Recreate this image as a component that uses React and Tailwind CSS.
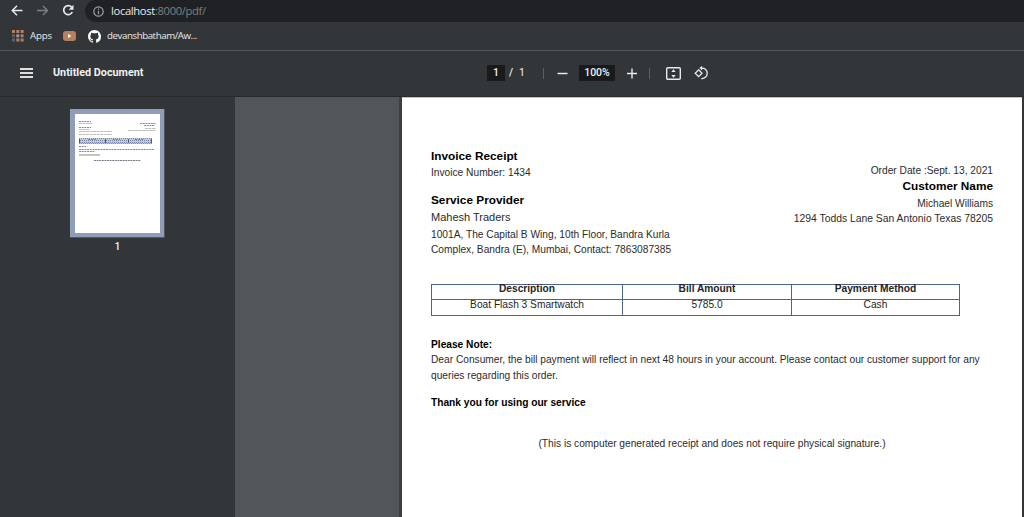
import React from "react";

function BrowserBar() {
  return (
    <div className="flex h-[22px] items-start">
      <svg className="ml-[11px] mt-[4px] shrink-0" width="12" height="13" viewBox="0 0 12 13" fill="none" stroke="#e8eaed" strokeWidth="1.5">
        <path d="M11.5 6.5H1.5M6 1.8L1.3 6.5L6 11.2" />
      </svg>
      <svg className="ml-[14px] mt-[4px] shrink-0" width="12" height="13" viewBox="0 0 12 13" fill="none" stroke="#7d8083" strokeWidth="1.4">
        <path d="M0 6.5H10M6 2L10.5 6.5L6 11" />
      </svg>
      <svg className="ml-[13px] mt-[4px] shrink-0" width="12" height="13" viewBox="0 0 12 13" fill="none" stroke="#e8eaed" strokeWidth="1.7">
        <path d="M9.7 3.3A4.5 4.5 0 1 0 10.3 8" />
        <path d="M11.5 0.8V5.7H6.7Z" fill="#e8eaed" stroke="none" />
      </svg>
      <div className="ml-[11px] flex h-[22px] flex-1 items-center rounded-l-full bg-[#202124] pl-[8px]">
        <svg width="11" height="11" viewBox="0 0 11 11" fill="none" stroke="#9aa0a6" strokeWidth="1.2">
          <circle cx="5.5" cy="5.5" r="4.7" />
          <path d="M5.5 4.8V8.2M5.5 2.6V3.8" />
        </svg>
        <div className="ml-[7px] whitespace-nowrap font-['Open_Sans',sans-serif] text-[11.2px] leading-[22px] tracking-[-0.33px] text-[#7d8083]">
          <span className="text-[#e8eaed]">localhost</span>:8000/pdf/
        </div>
      </div>
    </div>
  );
}

function Bookmarks() {
  return (
    <div className="flex h-[29px] items-center border-b border-[#53565a] font-['Open_Sans',sans-serif] text-[9.7px] tracking-[-0.42px] text-[#e8eaed]">
      <svg className="ml-[12px]" width="12" height="12" viewBox="0 0 12 12">
        <g fill="#b57f60">
          <path d="M0 0h3v3H0zM4.3 0h3v3h-3zM8.6 0h3v3h-3zM8.6 4.3h3v3h-3zM4.3 8.6h3v3h-3zM8.6 8.6h3v3h-3z" />
        </g>
        <path fill="#5d6064" d="M0 4.3h3v3H0zM0 8.6h3v3H0z" />
        <path fill="#8f9db8" d="M4.3 4.3h3v3h-3z" />
      </svg>
      <span className="ml-[6px] w-[33px] tracking-[-0.2px]">Apps</span>
      <svg width="13" height="10" viewBox="0 0 13 10">
        <rect width="13" height="10" rx="3" fill="#b57f60" />
        <path d="M5 3L8.4 5L5 7Z" fill="#fff" />
      </svg>
      <svg className="ml-[12px]" width="13" height="13" viewBox="0 0 16 16" fill="#fff">
        <path d="M8 0C3.58 0 0 3.58 0 8c0 3.54 2.29 6.53 5.47 7.59.4.07.55-.17.55-.38 0-.19-.01-.82-.01-1.49-2.01.37-2.53-.49-2.69-.94-.09-.23-.48-.94-.82-1.13-.28-.15-.68-.52-.01-.53.63-.01 1.08.58 1.23.82.72 1.21 1.87.87 2.33.66.07-.52.28-.87.51-1.07-1.78-.2-3.64-.89-3.64-3.95 0-.87.31-1.59.82-2.15-.08-.2-.36-1.02.08-2.12 0 0 .67-.21 2.2.82.64-.18 1.32-.27 2-.27s1.36.09 2 .27c1.53-1.04 2.2-.82 2.2-.82.44 1.1.16 1.92.08 2.12.51.56.82 1.27.82 2.15 0 3.07-1.87 3.75-3.65 3.95.29.25.54.73.54 1.48 0 1.07-.01 1.93-.01 2.2 0 .21.15.46.55.38A8.01 8.01 0 0 0 16 8c0-4.42-3.58-8-8-8z" />
      </svg>
      <span className="ml-[6px]">devanshbatham/Aw...</span>
    </div>
  );
}

function PdfToolbar() {
  return (
    <div className="flex h-[46px] shrink-0 items-center border-b border-[#282a2d] pb-[1px] font-[Roboto,sans-serif] text-[10.5px] font-medium text-[#f1f1f1]">
      <div className="ml-[20px] flex w-[13px] flex-col gap-[2px]">
        <div className="h-[2px] bg-[#dcdedf]" />
        <div className="h-[2px] bg-[#dcdedf]" />
        <div className="h-[2px] bg-[#dcdedf]" />
      </div>
      <div className="ml-[20px] w-[434px] text-[10.8px] font-bold">Untitled Document</div>
      <div className="flex h-[16px] w-[18px] items-center justify-center bg-[#191a1c]">1</div>
      <div className="ml-[4px] w-[10px]">/</div>
      <div className="w-[24px] font-normal">1</div>
      <div className="h-[11px] w-[1px] bg-[#5c5f63]" />
      <svg className="ml-[13px]" width="11" height="11" stroke="#e8eaed" strokeWidth="1.5">
        <path d="M0.5 5.5h10" />
      </svg>
      <div className="ml-[11px] flex h-[16px] w-[36px] items-center justify-center bg-[#191a1c]">100%</div>
      <svg className="ml-[12px]" width="10" height="11" stroke="#e8eaed" strokeWidth="1.4">
        <path d="M0 5.5h10M5 0.5v10" />
      </svg>
      <div className="ml-[12px] h-[11px] w-[1px] bg-[#5c5f63]" />
      <svg className="ml-[16px]" width="15" height="13" viewBox="0 0 15 13" fill="none">
        <rect x="0.7" y="0.7" width="13.6" height="11.6" rx="1" stroke="#e8eaed" strokeWidth="1.4" />
        <path d="M7.5 2.2L9.7 5H5.3ZM7.5 10.8L9.7 8H5.3Z" fill="#e8eaed" />
      </svg>
      <svg className="ml-[13px]" width="14" height="14" viewBox="0 0 14 14" fill="none" stroke="#e8eaed" strokeWidth="1.3">
        <path d="M4.6 3.8L8 7.2L4.600 10.600L1.200 7.200Z" />
        <path d="M7.2 2.100A5.300 5.300 0 1 1 7.200 12.600" />
        <path d="M8.200 -0.200V4.500L5.400 2.100Z" fill="#e8eaed" stroke="none" />
      </svg>
    </div>
  );
}

function Thumbnail() {
  return (
    <div className="h-[129px] w-[95px] border-r border-b border-[#53565a] bg-[#8f9db8] pl-[5px] pt-[5px]">
      <svg width="85" height="119" viewBox="0 0 85 119" fill="none">
        <rect width="85" height="119" fill="#fff" />
        <g stroke="#7f8ba3" strokeWidth="1" strokeDasharray="2 0.7">
          <path d="M4 7.500h12M4 13.500h12M65 9.500h16M69 11.500h11M4 32.500h8M4 35.500h75M4 37.500h16" />
        </g>
        <g stroke="#bdbeba" strokeWidth="1" strokeDasharray="3 0.5">
          <path d="M4 9.500h14M4 15.500h11M4 17.500h33M4 20.500h33M70 14.500h11M53 16.500h28" />
        </g>
        <path d="M4 41h21" stroke="#c5c6c3" strokeWidth="2" />
        <path d="M19 46.500h47" stroke="#777d86" strokeDasharray="2 0.6" />
        <rect x="4" y="24" width="73" height="6" fill="#c7c9cc" />
        <path d="M5 26.500h71M5 28.500h71" stroke="#7788aa" strokeDasharray="1 1" />
        <path d="M13 25.500h8M38 25.500h7M60 25.500h9" stroke="#af765c" strokeDasharray="2 1" />
        <path d="M4.500 25v4M30.500 25v4M53.500 25v4M76.500 25v4" stroke="#555b66" />
        <path d="M4 24.500h73M4 29.500h73" stroke="#8793aa" strokeDasharray="1 1" />
      </svg>
    </div>
  );
}

function InvoiceTable() {
  const cell = "border-[#4d648c] text-center";
  return (
    <div className="mt-[27px] grid h-[32px] w-[529px] grid-cols-[191px_169px_167px] grid-rows-[15px_15px] border border-[#4d648c] text-[10.2px] text-[#252525]">
      <div className={`${cell} border-b border-r font-bold leading-[8px]`}>Description</div>
      <div className={`${cell} border-b border-r font-bold leading-[8px]`}>Bill Amount</div>
      <div className={`${cell} border-b font-bold leading-[8px]`}>Payment Method</div>
      <div className={`${cell} border-r leading-[9px]`}>Boat Flash 3 Smartwatch</div>
      <div className={`${cell} border-r leading-[9px]`}>5785.0</div>
      <div className={`${cell} leading-[9px]`}>Cash</div>
    </div>
  );
}

function InvoicePage() {
  return (
    <div className="h-full w-[620px] border-t border-[#c4c5c6] bg-white pl-[29px] pr-[29px] pt-[50px] font-['Liberation_Sans',Arial,sans-serif] text-[10.2px] text-[#2b2b2b] whitespace-nowrap">
      <div className="flex h-[109px] justify-between">
        <div>
          <div className="h-[17px] text-[11.8px] font-bold leading-[17px] text-black">Invoice Receipt</div>
          <div className="h-[16px] leading-[16px]">Invoice Number: 1434</div>
          <div className="mt-[11px] h-[17px] text-[11.8px] font-bold leading-[17px] text-black">Service Provider</div>
          <div className="h-[17px] text-[11px] leading-[17px]">Mahesh Traders</div>
          <div className="h-[15px] leading-[18px]">1001A, The Capital B Wing, 10th Floor, Bandra Kurla</div>
          <div className="h-[16px] leading-[17px]">Complex, Bandra (E), Mumbai, Contact: 7863087385</div>
        </div>
        <div className="pt-[14px] text-right">
          <div className="h-[16px] leading-[18px]">Order Date :Sept. 13, 2021</div>
          <div className="h-[17px] text-[11.8px] font-bold leading-[17px] text-black">Customer Name</div>
          <div className="h-[16px] leading-[18px]">Michael Williams</div>
          <div className="h-[15px] text-[10.35px] leading-[15px]">1294 Todds Lane San Antonio Texas 78205</div>
        </div>
      </div>
      <InvoiceTable />
      <div className="mt-[20px] h-[16px] font-bold leading-[18px] text-black">Please Note:</div>
      <div className="h-[15px] leading-[15px]">Dear Consumer, the bill payment will reflect in next 48 hours in your account. Please contact our customer support for any</div>
      <div className="h-[16px] leading-[18px]">queries regarding this order.</div>
      <div className="mt-[12px] h-[16px] font-bold leading-[16px] text-black">Thank you for using our service</div>
      <div className="mt-[24px] h-[16px] text-center leading-[18px]">(This is computer generated receipt and does not require physical signature.)</div>
    </div>
  );
}

export default function App() {
  return (
    <div className="flex h-[517px] w-[1024px] flex-col overflow-hidden bg-[#323639]">
      <BrowserBar />
      <Bookmarks />
      <PdfToolbar />
      <div className="flex min-h-0 flex-1">
        <div className="flex w-[235px] shrink-0 flex-col items-center pt-[12px]">
          <Thumbnail />
          <div className="mt-[2px] font-[Roboto,sans-serif] text-[10.5px] font-medium leading-[14px] text-[#f1f1f1]">1</div>
        </div>
        <div className="flex min-w-0 flex-1 bg-[#525659] pl-[164px]">
          <div className="w-[3px] bg-[#3b3f42]" />
          <InvoicePage />
          <div className="w-[2px] bg-[#323639]" />
        </div>
      </div>
    </div>
  );
}
